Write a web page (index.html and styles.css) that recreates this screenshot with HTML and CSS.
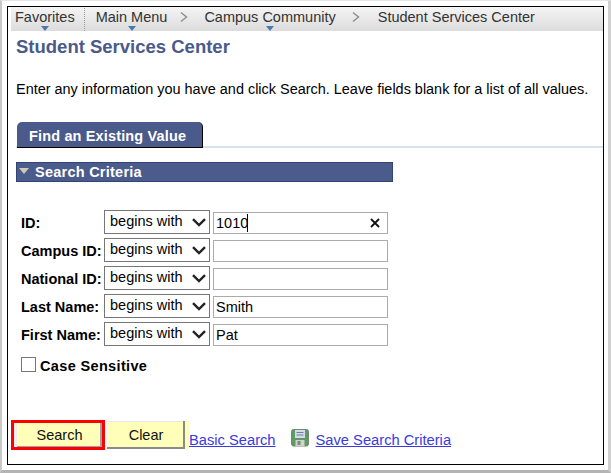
FILE: index.html
```html
<!DOCTYPE html>
<html>
    <head>
        <meta charset="UTF-8">
        <title>Student Services Center</title>
        <link rel="stylesheet" href="styles.css">
    </head>
    <body>
        <div class="shot">
            <div class="window">
                <div class="nav">
                    <span class="nav-item fav">Favorites<i class="caret"></i></span>
                    <span class="nav-sep"></span>
                    <span class="nav-item main">Main Menu<i class="caret"></i></span>
                    <svg class="chev" width="8" height="12" viewBox="0 0 8 12"><path d="M1 1.5 6.5 6 1 10.5" fill="none" stroke="#8c8c8c" stroke-width="1.4"/></svg>
                    <span class="nav-item campus">Campus Community<i class="caret"></i></span>
                    <svg class="chev chev-wide" width="8" height="12" viewBox="0 0 8 12"><path d="M1 1.5 6.5 6 1 10.5" fill="none" stroke="#8c8c8c" stroke-width="1.4"/></svg>
                    <span class="nav-item last">Student Services Center</span>
                </div>
                <div class="content">
                    <h1 class="title">Student Services Center</h1>
                    <p class="intro">Enter any information you have and click Search. Leave fields blank for a list of all values.</p>
                    <div class="tabs">
                        <div class="tab">Find an Existing Value</div>
                    </div>
                    <div class="section-bar"><i class="tri"></i>Search Criteria</div>
                    <div class="criteria">
                        <label>ID:</label>
                        <select><option>begins with</option></select>
                        <div class="field">
                            <input type="text" value="1010">
                            <i class="text-caret"></i>
                            <svg class="clear" width="10" height="10" viewBox="0 0 10 10"><path d="M1 1 9 9M9 1 1 9" stroke="#111" stroke-width="1.8"/></svg>
                        </div>
                        <label>Campus ID:</label>
                        <select><option>begins with</option></select>
                        <div class="field"><input type="text"></div>
                        <label>National ID:</label>
                        <select><option>begins with</option></select>
                        <div class="field"><input type="text"></div>
                        <label>Last Name:</label>
                        <select><option>begins with</option></select>
                        <div class="field"><input type="text" value="Smith"></div>
                        <label>First Name:</label>
                        <select><option>begins with</option></select>
                        <div class="field"><input type="text" value="Pat"></div>
                    </div>
                    <div class="case-row">
                        <span class="check"></span>
                        <span class="case-label">Case Sensitive</span>
                    </div>
                    <div class="actions">
                        <div class="highlight"><div class="btn search-btn">Search</div></div>
                        <div class="btn clear-btn">Clear</div>
                        <a class="link" href="#">Basic Search</a>
                        <svg class="save" width="18" height="18" viewBox="0 0 18 18">
                            <rect x="0.5" y="0.5" width="17" height="16.5" rx="2" fill="#5f9a63" stroke="#6f8a70"/>
                            <rect x="4" y="1" width="10" height="8" fill="#d5dbe8"/>
                            <path d="M5.5 3.5h7M5.5 6h7" stroke="#6d7fa8" stroke-width="1"/>
                            <rect x="4.5" y="11" width="9" height="6" fill="#cfd2cf"/>
                            <rect x="6.5" y="12" width="3" height="4" fill="#7c8a7e"/>
                        </svg>
                        <a class="link" href="#">Save Search Criteria</a>
                    </div>
                </div>
            </div>
        </div>
    </body>
</html>
```

FILE: styles.css
```css
html, body {
    margin: 0;
    padding: 0;
    background: #fff;
}
body {
    font-family: "Liberation Sans", Arial, sans-serif;
    font-size: 14.5px;
    color: #000;
}
.shot {
    width: 611px;
    height: 473px;
    box-sizing: border-box;
    padding: 5px 4px 5px 5px;
    border-top: 1px solid #e6e6e6;
    border-right: 3px solid #d0d0d0;
    border-bottom: 3px solid #b4b4b4;
    border-left: 2px solid #c8c8c8;
}
.window {
    height: 100%;
    box-sizing: border-box;
    border: 1px solid #000;
    padding-left: 3px;
}
.nav {
    height: 24px;
    box-sizing: border-box;
    padding-top: 1px;
    display: flex;
    align-items: flex-start;
    background: linear-gradient(#f4f4f4, #dcdcdc);
    color: #333;
    line-height: 18px;
}
.nav-item {
    position: relative;
    white-space: nowrap;
}
.nav-item .caret {
    position: absolute;
    top: 18px;
    left: 50%;
    margin-left: -4px;
    width: 0;
    height: 0;
    border-left: 4px solid transparent;
    border-right: 4px solid transparent;
    border-top: 5px solid #4a7ab0;
}
.fav {
    margin-left: 4px;
}
.nav-sep {
    height: 23px;
    margin: 0 11px 0 9px;
    border-left: 1px dotted #999;
}
.chev {
    margin: 3px 16px 0 13px;
}
.chev-wide {
    margin: 3px 18px 0 16px;
}
.content {
    padding-left: 5px;
}
.title {
    margin: 0;
    padding-top: 6px;
    font-size: 18.5px;
    line-height: 20px;
    font-weight: bold;
    color: #4a5a8a;
}
.intro {
    margin: 24px 0 0;
    font-size: 14.45px;
    line-height: 16px;
    white-space: nowrap;
}
.tabs {
    margin-top: 25px;
    height: 24px;
    display: flex;
    border-bottom: 2px solid #d5e2f2;
}
.tab {
    margin-left: 1px;
    width: 186px;
    height: 26px;
    box-sizing: border-box;
    padding: 5px 0 0 12px;
    background: #4a5a8a;
    border-right: 1px solid #000;
    border-bottom: 1px solid #000;
    border-radius: 5px 5px 0 0;
    color: #fff;
    font-weight: bold;
    line-height: 18px;
    letter-spacing: 0.15px;
}
.section-bar {
    margin-top: 14px;
    width: 377px;
    height: 20px;
    box-sizing: border-box;
    display: flex;
    align-items: center;
    background: #4b5b8c;
    border: 1px solid #2f4675;
    color: #fff;
    font-weight: bold;
    letter-spacing: 0.25px;
}
.tri {
    width: 0;
    height: 0;
    margin: -2px 6px 0 2px;
    border-left: 5px solid transparent;
    border-right: 5px solid transparent;
    border-top: 6px solid #cfcbb0;
}
.criteria {
    margin: 28px 0 0 5px;
    display: grid;
    grid-template-columns: 83px 106px 175px;
    grid-auto-rows: 24px;
    row-gap: 4px;
    column-gap: 0;
}
.criteria label {
    font-weight: bold;
    line-height: 27px;
    white-space: nowrap;
}
select {
    width: 106px;
    height: 24px;
    box-sizing: border-box;
    padding: 0 0 3px 5px;
    border: 1px solid #767676;
    border-radius: 0;
    font: 14.5px "Liberation Sans", Arial, sans-serif;
    color: #000;
    -webkit-appearance: none;
    appearance: none;
    background: #fff url("data:image/svg+xml,%3Csvg xmlns='http://www.w3.org/2000/svg' width='14' height='9' viewBox='0 0 14 9'%3E%3Cpath d='M1 1.2 7 7 13 1.2' fill='none' stroke='%23222' stroke-width='2.4'/%3E%3C/svg%3E") no-repeat 87px 7px;
}
.field {
    position: relative;
    margin-left: 3px;
    padding-top: 2px;
}
.field input {
    display: block;
    width: 175px;
    height: 22px;
    box-sizing: border-box;
    padding: 0 0 1px 2px;
    border: 1px solid #ababab;
    font: 14.5px "Liberation Sans", Arial, sans-serif;
    color: #000;
    outline: none;
}
.text-caret {
    position: absolute;
    left: 34px;
    top: 4px;
    width: 1px;
    height: 18px;
    background: #000;
}
.clear {
    position: absolute;
    right: 5px;
    top: 8px;
}
.case-row {
    margin: 11px 0 0 5px;
    display: flex;
    align-items: flex-start;
}
.check {
    width: 13px;
    height: 13px;
    border: 1px solid #767676;
}
.case-label {
    margin: 1px 0 0 4px;
    font-weight: bold;
    letter-spacing: 0.35px;
}
.actions {
    margin: 46px 0 0 -5px;
    display: flex;
    align-items: center;
}
.highlight {
    width: 94px;
    height: 30px;
    box-sizing: border-box;
    border: 3px solid #f00;
    background: #eee;
}
.btn {
    box-sizing: border-box;
    background: #ffffb9;
    text-align: center;
    color: #111;
}
.search-btn {
    margin-left: 3px;
    height: 24px;
    padding-left: 2px;
    line-height: 24px;
    border-right: 2px solid #a0a0a0;
    border-bottom: 1px solid #a0a0a0;
}
.clear-btn {
    margin-left: 2px;
    width: 82px;
    height: 28px;
    padding-right: 4px;
    line-height: 29px;
    box-shadow: inset -4px 0 0 #ffffb9, inset -6px 0 0 #8a8a8a, inset 0 -2px 0 #8a8a8a, inset 0 1px 0 #e8e8e8;
}
.link {
    color: #3a3ae0;
    font-size: 14.7px;
    text-decoration: underline;
    margin-top: 9px;
}
.save {
    margin: 5px 7px 0 15px;
}
```
